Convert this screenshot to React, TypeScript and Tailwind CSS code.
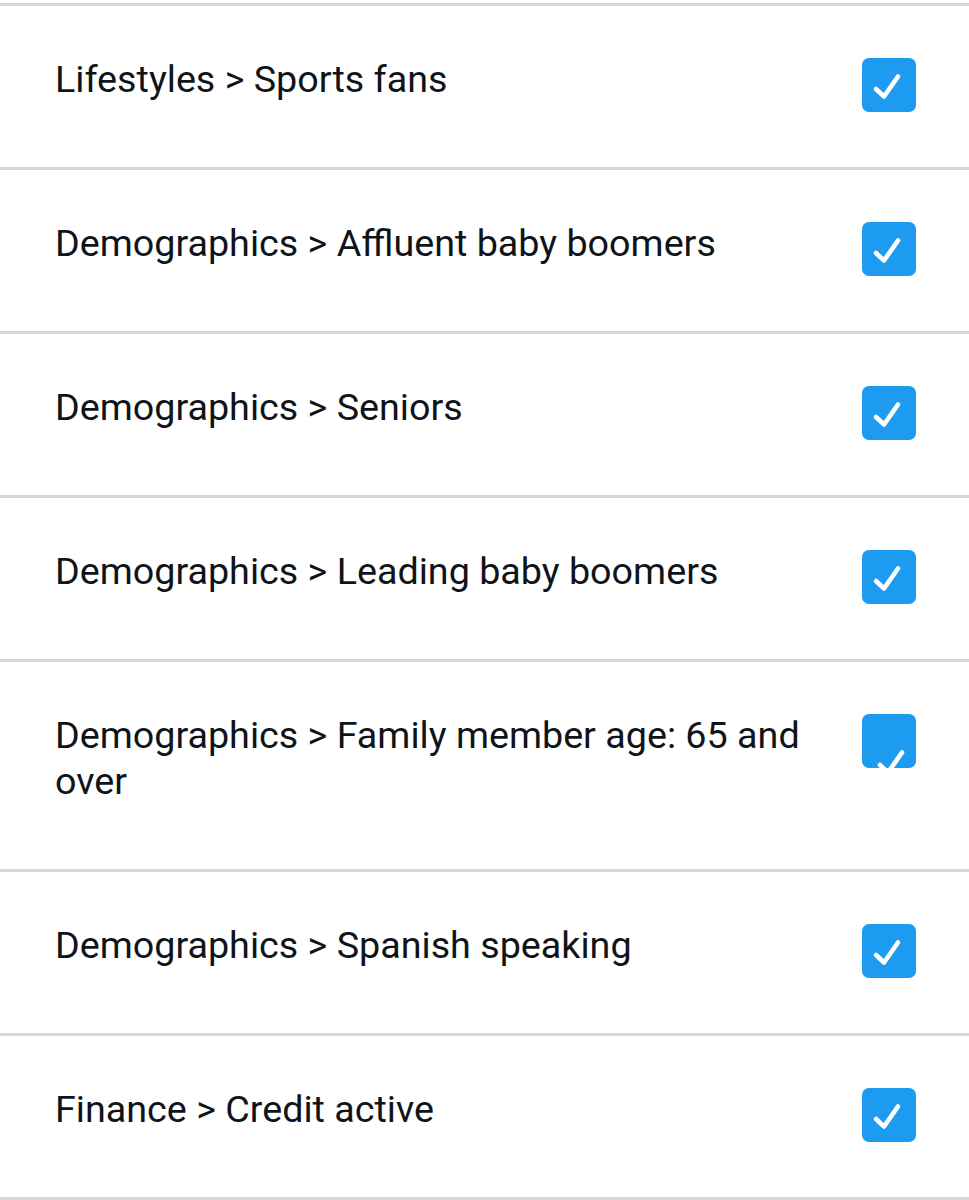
import React from "react";

const rows: { text: string; shifted?: boolean }[] = [
  { text: "Lifestyles > Sports fans" },
  { text: "Demographics > Affluent baby boomers" },
  { text: "Demographics > Seniors" },
  { text: "Demographics > Leading baby boomers" },
  { text: "Demographics > Family member age: 65 and over", shifted: true },
  { text: "Demographics > Spanish speaking" },
  { text: "Finance > Credit active" },
];

function Check({ shifted }: { shifted?: boolean }) {
  return (
    <div className="h-[46px] shrink-0">
      <div className="mt-[2px] w-[54px] h-[54px] rounded-[7px] bg-[#1d9bf0] overflow-hidden">
        <svg viewBox="0 0 54 54" width="54" height="54">
          <g transform={shifted ? "translate(4 20)" : undefined}>
            <path
              d="M14 31 L22 38.5 L36 18.5"
              fill="none"
              stroke="#ffffff"
              strokeWidth="4.6"
              strokeLinecap="round"
              strokeLinejoin="round"
            />
          </g>
        </svg>
      </div>
    </div>
  );
}

export default function App() {
  return (
    <div
      className="w-[969px] h-[1200px] bg-white overflow-hidden pt-[3px]"
      style={{ fontFamily: "Roboto, 'Noto Sans', sans-serif" }}
    >
      <div className="border-t-[3px] border-[#cfd9de]">
        {rows.map((r, i) => (
          <div
            key={i}
            className="flex items-start gap-[40px] pl-[55px] pr-[53px] pt-[50px] pb-[65px] border-b-[3px] border-[#cfd9de]"
          >
            <div className="flex-1 text-[37.7px] leading-[46px] text-[#0f1419]">{r.text}</div>
            <Check shifted={r.shifted} />
          </div>
        ))}
      </div>
    </div>
  );
}
